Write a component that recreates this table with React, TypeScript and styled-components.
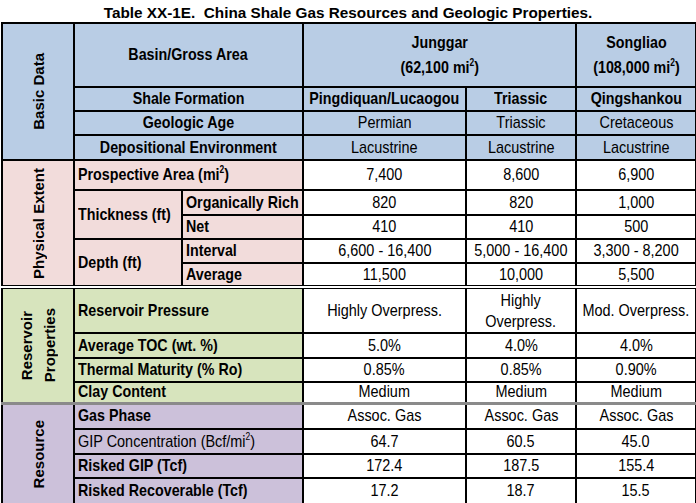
import React from 'react';
import styled, { createGlobalStyle, css } from 'styled-components';

const Global = createGlobalStyle`
  html, body { margin: 0; padding: 0; background: #fff; }
  body { font-family: "Liberation Sans", Arial, sans-serif; color: #000; }
`;

const Page = styled.div`
  width: 696px;
  height: 503px;
  overflow: hidden;
  display: flex;
  flex-direction: column;
`;

const Title = styled.h1`
  margin: 0;
  height: 18px;
  padding-top: 4px;
  font: bold 15.3px/18px "Liberation Sans", Arial, sans-serif;
  text-align: center;
  white-space: pre;
`;

const Table = styled.table`
  margin-left: 1px;
  width: 694px;
  table-layout: fixed;
  border-collapse: collapse;
  border-top: 2px solid #000;
  border-left: 2px solid #000;
  border-right: 2px solid #333;
`;

type Sep = 'double' | 'grey' | undefined;

const Row = styled.tr<{ $h: number; $sep?: Sep }>`
  height: ${(p) => p.$h}px;
  ${(p) =>
    p.$sep === 'double' &&
    css`
      & > td { border-top: 4px double #000; }
    `}
  ${(p) =>
    p.$sep === 'grey' &&
    css`
      & > td { border-top: 3px solid #8a8a8a; }
    `}
`;

const Cell = styled.td`
  border: 2px solid #000;
  padding: 0;
  vertical-align: middle;
  overflow: hidden;
  white-space: nowrap;
`;

const SectionCell = styled(Cell)<{ $bg: string }>`
  background: ${(p) => p.$bg};
  text-align: center;
`;

const Vertical = styled.div`
  writing-mode: vertical-rl;
  transform: rotate(180deg);
  margin: 0 auto;
  font: bold 15px/23px "Liberation Sans", Arial, sans-serif;
  text-align: center;
  white-space: nowrap;
`;

const TextCell = styled(Cell)<{ $bg: string; $center: boolean; $bold: boolean; $lh: number }>`
  background: ${(p) => p.$bg};
  text-align: ${(p) => (p.$center ? 'center' : 'left')};
  padding-left: ${(p) => (p.$center ? 0 : 3)}px;
  font-family: "Liberation Sans", Arial, sans-serif;
  font-size: 17px;
  font-weight: ${(p) => (p.$bold ? 700 : 400)};
  line-height: ${(p) => p.$lh}px;
`;

/* condensed text, imitating Arial Narrow */
const Narrow = styled.span<{ $bold: boolean; $center: boolean }>`
  display: inline-block;
  transform: scaleX(${(p) => (p.$bold ? 0.84 : 0.85)});
  transform-origin: ${(p) => (p.$center ? 'center' : 'left')} center;
  margin: ${(p) => (p.$center ? '0 -60px' : '0')};
`;

const Sup = styled.sup`
  font-size: 10px;
  line-height: 0;
  vertical-align: 7px;
`;

type CellProps = {
  bg?: string;
  center?: boolean;
  bold?: boolean;
  lh?: number;
  colSpan?: number;
  rowSpan?: number;
  children: React.ReactNode;
};

function Label({ bg = '#fff', center = false, bold = true, lh = 18, colSpan, rowSpan, children }: CellProps) {
  return (
    <TextCell $bg={bg} $center={center} $bold={bold} $lh={lh} colSpan={colSpan} rowSpan={rowSpan}>
      <Narrow $bold={bold} $center={center}>{children}</Narrow>
    </TextCell>
  );
}

function Data({ bg = '#fff', bold = false, lh = 18, colSpan, rowSpan, children }: CellProps) {
  return (
    <TextCell $bg={bg} $center $bold={bold} $lh={lh} colSpan={colSpan} rowSpan={rowSpan}>
      <Narrow $bold={bold} $center>{children}</Narrow>
    </TextCell>
  );
}

const BLUE = '#b9cde5';
const PINK = '#f2dcdb';
const GREEN = '#d7e4bd';
const PURPLE = '#ccc1da';

const mi2 = (
  <>
    mi<Sup>2</Sup>
  </>
);

export default function App() {
  return (
    <Page>
      <Global />
      <Title>{'Table XX-1E.  China Shale Gas Resources and Geologic Properties.'}</Title>
      <Table>
        <colgroup>
          <col style={{ width: 72 }} />
          <col style={{ width: 108 }} />
          <col style={{ width: 121 }} />
          <col style={{ width: 163 }} />
          <col style={{ width: 110 }} />
          <col style={{ width: 120 }} />
        </colgroup>
        <tbody>
          <Row $h={64}>
            <SectionCell $bg={BLUE} rowSpan={4}>
              <Vertical>Basic Data</Vertical>
            </SectionCell>
            <Label bg={BLUE} center colSpan={2}>Basin/Gross Area</Label>
            <Data bg={BLUE} bold lh={25} colSpan={2}>
              Junggar
              <br />
              (62,100 {mi2})
            </Data>
            <Data bg={BLUE} bold lh={25}>
              Songliao
              <br />
              (108,000 {mi2})
            </Data>
          </Row>
          <Row $h={24}>
            <Label bg={BLUE} center colSpan={2}>Shale Formation</Label>
            <Data bg={BLUE} bold>Pingdiquan/Lucaogou</Data>
            <Data bg={BLUE} bold>Triassic</Data>
            <Data bg={BLUE} bold>Qingshankou</Data>
          </Row>
          <Row $h={24}>
            <Label bg={BLUE} center colSpan={2}>Geologic Age</Label>
            <Data bg={BLUE}>Permian</Data>
            <Data bg={BLUE}>Triassic</Data>
            <Data bg={BLUE}>Cretaceous</Data>
          </Row>
          <Row $h={25}>
            <Label bg={BLUE} center colSpan={2}>Depositional Environment</Label>
            <Data bg={BLUE}>Lacustrine</Data>
            <Data bg={BLUE}>Lacustrine</Data>
            <Data bg={BLUE}>Lacustrine</Data>
          </Row>

          <Row $h={30}>
            <SectionCell $bg={PINK} rowSpan={5}>
              <Vertical>Physical Extent</Vertical>
            </SectionCell>
            <Label bg={PINK} colSpan={2}>Prospective Area ({mi2})</Label>
            <Data>7,400</Data>
            <Data>8,600</Data>
            <Data>6,900</Data>
          </Row>
          <Row $h={25}>
            <Label bg={PINK} rowSpan={2}>Thickness (ft)</Label>
            <Label bg={PINK}>Organically Rich</Label>
            <Data>820</Data>
            <Data>820</Data>
            <Data>1,000</Data>
          </Row>
          <Row $h={24}>
            <Label bg={PINK}>Net</Label>
            <Data>410</Data>
            <Data>410</Data>
            <Data>500</Data>
          </Row>
          <Row $h={24}>
            <Label bg={PINK} rowSpan={2}>Depth (ft)</Label>
            <Label bg={PINK}>Interval</Label>
            <Data>6,600 - 16,400</Data>
            <Data>5,000 - 16,400</Data>
            <Data>3,300 - 8,200</Data>
          </Row>
          <Row $h={24}>
            <Label bg={PINK}>Average</Label>
            <Data>11,500</Data>
            <Data>10,000</Data>
            <Data>5,500</Data>
          </Row>

          <Row $h={46} $sep="double">
            <SectionCell $bg={GREEN} rowSpan={4}>
              <Vertical>
                Reservoir
                <br />
                Properties
              </Vertical>
            </SectionCell>
            <Label bg={GREEN} colSpan={2}>Reservoir Pressure</Label>
            <Data>Highly Overpress.</Data>
            <Data lh={21}>
              Highly
              <br />
              Overpress.
            </Data>
            <Data>Mod. Overpress.</Data>
          </Row>
          <Row $h={25}>
            <Label bg={GREEN} colSpan={2}>Average TOC (wt. %)</Label>
            <Data>5.0%</Data>
            <Data>4.0%</Data>
            <Data>4.0%</Data>
          </Row>
          <Row $h={24}>
            <Label bg={GREEN} colSpan={2}>Thermal Maturity (% Ro)</Label>
            <Data>0.85%</Data>
            <Data>0.85%</Data>
            <Data>0.90%</Data>
          </Row>
          <Row $h={21}>
            <Label bg={GREEN} colSpan={2}>Clay Content</Label>
            <Data>Medium</Data>
            <Data>Medium</Data>
            <Data>Medium</Data>
          </Row>

          <Row $h={26} $sep="grey">
            <SectionCell $bg={PURPLE} rowSpan={4}>
              <Vertical>Resource</Vertical>
            </SectionCell>
            <Label bg={PURPLE} colSpan={2}>Gas Phase</Label>
            <Data>Assoc. Gas</Data>
            <Data>Assoc. Gas</Data>
            <Data>Assoc. Gas</Data>
          </Row>
          <Row $h={25}>
            <Label bg={PURPLE} bold={false} colSpan={2}>
              GIP Concentration (Bcf/{mi2})
            </Label>
            <Data>64.7</Data>
            <Data>60.5</Data>
            <Data>45.0</Data>
          </Row>
          <Row $h={24}>
            <Label bg={PURPLE} colSpan={2}>Risked GIP (Tcf)</Label>
            <Data>172.4</Data>
            <Data>187.5</Data>
            <Data>155.4</Data>
          </Row>
          <Row $h={26}>
            <Label bg={PURPLE} colSpan={2}>Risked Recoverable (Tcf)</Label>
            <Data>17.2</Data>
            <Data>18.7</Data>
            <Data>15.5</Data>
          </Row>
        </tbody>
      </Table>
    </Page>
  );
}
